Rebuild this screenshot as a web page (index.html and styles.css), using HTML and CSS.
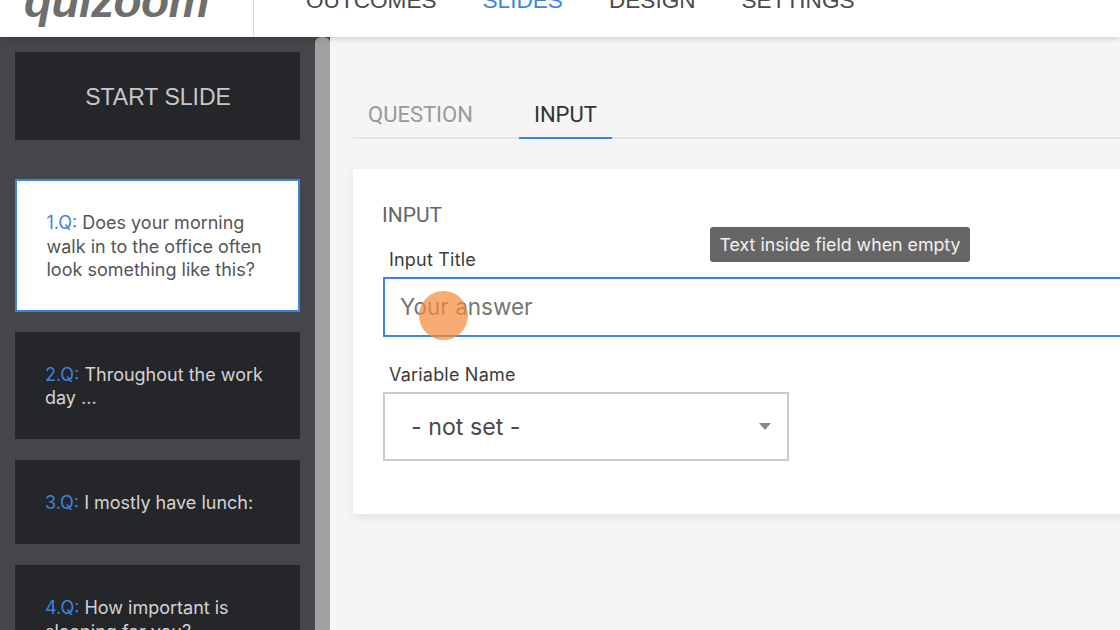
FILE: index.html
```html
<!DOCTYPE html>
<html lang="en">
<head>
    <meta charset="UTF-8">
    <meta name="viewport" content="width=device-width, initial-scale=1.0">
    <title>Quiz editor - Slides</title>
    <link rel="stylesheet" href="styles.css">
</head>
<body>
    <header class="topbar">
        <div class="logo-cell"><span class="logo">quizoom</span></div>
        <nav class="nav">
            <a class="nav-link">OUTCOMES</a>
            <a class="nav-link active">SLIDES</a>
            <a class="nav-link">DESIGN</a>
            <a class="nav-link">SETTINGS</a>
        </nav>
    </header>

    <div class="workspace">
        <aside class="sidebar">
            <div class="slide-list">
                <div class="slide start">START SLIDE</div>
                <div class="slide current"><span class="num">1.Q:</span> Does your morning walk in to the office often look something like this?</div>
                <div class="slide second"><span class="num">2.Q:</span> Throughout the work day ...</div>
                <div class="slide third"><span class="num">3.Q:</span> I mostly have lunch:</div>
                <div class="slide fourth"><span class="num">4.Q:</span> How important is sleeping for you?</div>
            </div>
            <div class="scrollbar"></div>
        </aside>

        <main class="content">
            <div class="tabs">
                <a class="tab">QUESTION</a>
                <a class="tab active">INPUT</a>
            </div>

            <section class="panel">
                <h2 class="panel-title">INPUT</h2>
                <label class="field-label">Input Title</label>
                <div class="text-input">Your answer</div>
                <label class="field-label second-label">Variable Name</label>
                <div class="select">
                    <span>- not set -</span>
                    <span class="caret"></span>
                </div>
                <div class="tooltip">Text inside field when empty</div>
                <div class="click-dot"></div>
            </section>
        </main>
    </div>
</body>
</html>
```

FILE: styles.css
```css
* {
    box-sizing: border-box;
}

html, body {
    margin: 0;
    height: 630px;
    overflow: hidden;
}

body {
    font-family: Inter, 'Noto Sans', sans-serif;
    background: #f5f5f5;
    display: flex;
    flex-direction: column;
}

.topbar {
    height: 37px;
    flex: none;
    background: #fff;
    display: flex;
    align-items: flex-end;
    overflow: hidden;
    position: relative;
    z-index: 2;
    box-shadow: 0 1px 6px rgba(0, 0, 0, 0.18);
}

.logo-cell {
    width: 254px;
    height: 37px;
    flex: none;
    border-right: 1px solid #dcdcdc;
    padding-left: 24px;
    display: flex;
    align-items: flex-end;
}

.logo {
    font-family: 'Liberation Sans', sans-serif;
    font-weight: bold;
    font-style: italic;
    font-size: 46px;
    line-height: 37px;
    height: 37px;
    position: relative;
    top: -17px;
    color: #6e6e6e;
    letter-spacing: -0.6px;
}

.nav {
    display: flex;
    gap: 46px;
    padding-left: 52px;
    padding-bottom: 24px;
}

.nav-link {
    font-family: 'Liberation Sans', sans-serif;
    font-size: 22.6px;
    line-height: 24px;
    color: #4a4a4a;
}

.nav-link.active {
    color: #3f84dc;
}

.workspace {
    flex: 1;
    display: flex;
    min-height: 0;
}

.sidebar {
    width: 330px;
    flex: none;
    display: flex;
    background: #45464a;
    overflow: hidden;
}

.slide-list {
    width: 315px;
    flex: none;
    padding: 15px 15px 0;
}

.scrollbar {
    width: 15px;
    background: #a1a1a1;
    border-top-left-radius: 6px;
    border-top-right-radius: 6px;
}

.slide {
    background: #24262a;
    color: #d4d4d4;
    font-size: 18px;
    line-height: 23.5px;
    width: 285px;
    padding: 0 30px;
}

.slide .num {
    color: #3f84dc;
}

.slide.start {
    height: 88px;
    margin-bottom: 39px;
    font-family: 'Liberation Sans', sans-serif;
    font-size: 23px;
    display: flex;
    align-items: center;
    justify-content: center;
    padding: 4px 0 0 1px;
    color: #c8c8c8;
}

.slide.current {
    height: 133px;
    background: #fff;
    border: 2px solid #3f84dc;
    color: #555;
    padding: 30px 20px 0 29.5px;
    margin-bottom: 20px;
}

.slide.second {
    height: 107px;
    padding-top: 30.5px;
    margin-bottom: 21px;
}

.slide.third {
    height: 84px;
    padding-top: 31px;
    margin-bottom: 21px;
}

.slide.fourth {
    height: 110px;
    padding-top: 31px;
}

.content {
    flex: 1;
    min-width: 0;
    padding: 63px 0 0 23px;
    overflow: hidden;
}

.tabs {
    display: flex;
    height: 39px;
    border-bottom: 2px solid #e4e4e4;
}

.tab {
    font-family: Roboto, sans-serif;
    font-size: 22px;
    line-height: 30px;
    color: #999;
    padding: 0 15px;
    height: 39px;
}

.tab.active {
    color: #333;
    border-bottom: 2px solid #3f84dc;
    margin-left: 31px;
    width: 93px;
    text-align: center;
}

.panel {
    position: relative;
    width: 900px;
    height: 345px;
    margin-top: 30px;
    background: #fff;
    box-shadow: 0 3px 8px rgba(0, 0, 0, 0.08);
    padding: 33px 0 0 30px;
}

.panel-title {
    margin: 0 0 0 -1px;
    font-family: Roboto, sans-serif;
    font-weight: 400;
    font-size: 21px;
    line-height: 26px;
    color: #666;
}

.field-label {
    display: block;
    margin: 19px 0 4px 6px;
    font-size: 18px;
    line-height: 26px;
    letter-spacing: 0.2px;
    color: #3c3c3c;
}

.field-label.second-label {
    margin-top: 25px;
}

.text-input {
    width: 860px;
    height: 60px;
    border: 2px solid #3f84dc;
    font-size: 22.5px;
    line-height: 56px;
    padding-left: 15px;
    color: #757575;
    background: #fff;
}

.select {
    width: 406px;
    height: 69px;
    border: 2px solid #cbcbcb;
    display: flex;
    align-items: center;
    justify-content: space-between;
    padding: 0 16px 0 26px;
    font-size: 23.2px;
    color: #4a4a4a;
}

.caret {
    width: 0;
    height: 0;
    border-left: 6.5px solid transparent;
    border-right: 6.5px solid transparent;
    border-top: 7px solid #888;
}

.tooltip {
    position: absolute;
    left: 357px;
    top: 58px;
    width: 260px;
    height: 35px;
    background: #666;
    color: #f2f2f2;
    border-radius: 3px;
    font-size: 17.8px;
    line-height: 35px;
    text-align: center;
}

.click-dot {
    position: absolute;
    left: 66px;
    top: 122px;
    width: 49px;
    height: 49px;
    border-radius: 50%;
    background: rgba(243, 140, 60, 0.72);
}
```
